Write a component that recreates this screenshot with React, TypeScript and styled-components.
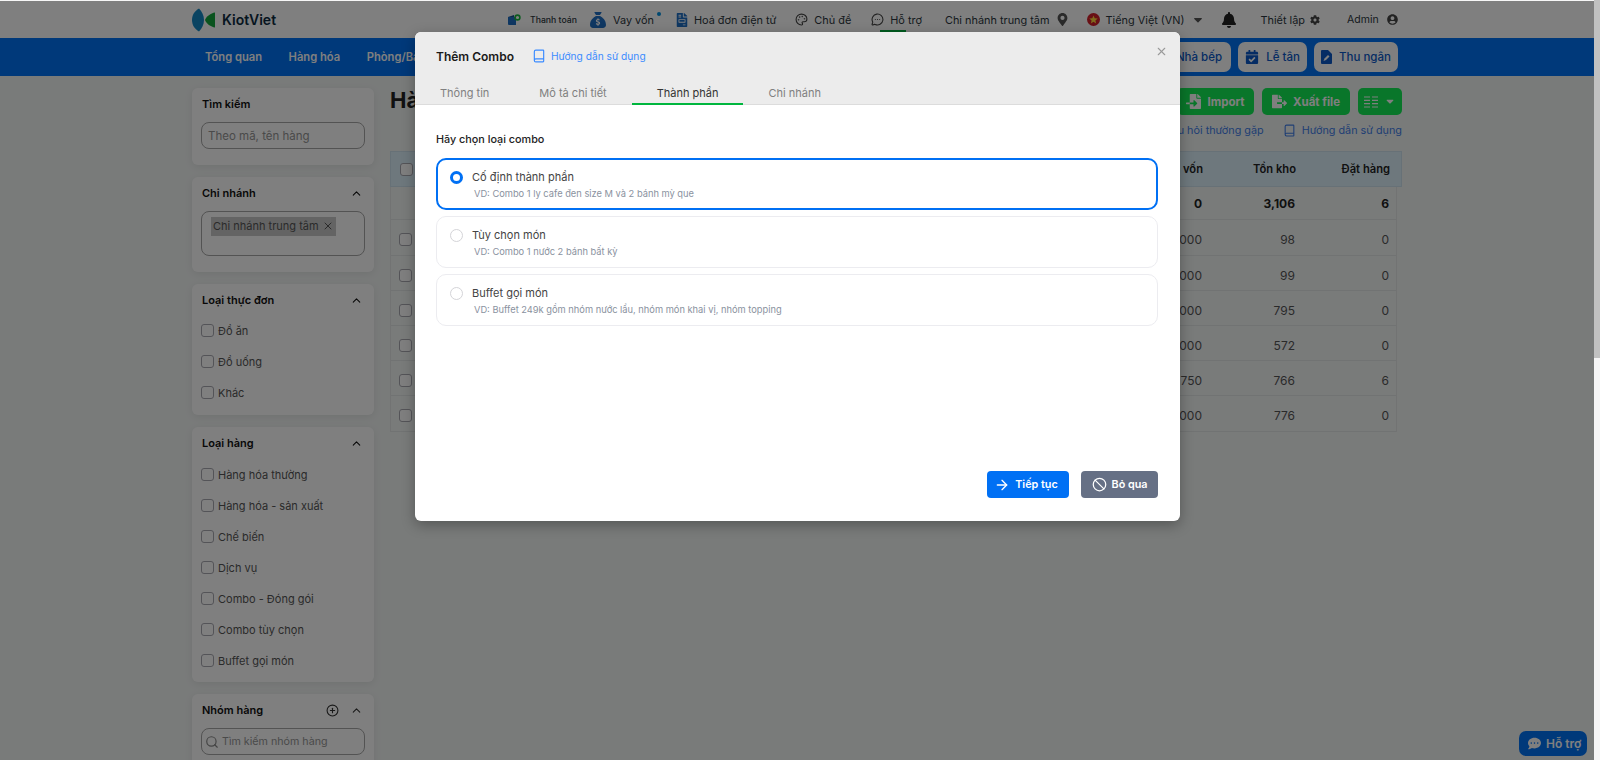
import React from "react";
import styled, { createGlobalStyle } from "styled-components";
import { ArrowRight, Ban, Book, ChevronUp, CirclePlus, MessageCircleMore, Palette, Search, X } from "lucide-react";
import { FaBell, FaCalendarCheck, FaCog, FaCommentDots, FaFileExport, FaFileImport, FaFileInvoice, FaMapMarkerAlt, FaSortDown, FaUserCircle, FaUtensils } from "react-icons/fa";
import { FaSackDollar } from "react-icons/fa6";

const Global = createGlobalStyle`
  html, body { margin: 0; height: 760px; overflow: hidden; background: #f6f6f6; }
  * { box-sizing: border-box; }
  body { font-family: Inter, "Noto Sans", "Liberation Sans", sans-serif; color: #1f2933; }
`;

const Shell = styled.div`display: flex; height: 760px; width: 1600px; overflow: hidden;`;
const Page = styled.div`position: relative; width: 1594px; height: 760px; margin-top: 1px; background: #f3f6f5; overflow: hidden;`;
const ScrollTrack = styled.div`width: 6px; height: 760px; background: #f6f6f6;`;
const ScrollThumb = styled.div`width: 6px; height: 358px; background: #c1c1c1;`;

const Header = styled.header`display: flex; align-items: center; height: 37px; padding-left: 192px; background: #fff;`;
const Logo = styled.div`display: flex; align-items: center; gap: 6px; width: 316px; font-size: 14px; font-weight: 600; color: #0d2b40;`;
const TopItem = styled.div<{ $ml: number; $size?: number; $weight?: number; $gap?: number }>`
  display: flex; align-items: center; gap: ${p => p.$gap ?? 6}px; margin-left: ${p => p.$ml}px; position: relative;
  font-size: ${p => p.$size ?? 10.9}px; font-weight: ${p => p.$weight ?? 400}; color: #2c3640; white-space: nowrap;
`;
const Dot = styled.span`position: absolute; right: -7px; top: 0; width: 4px; height: 4px; border-radius: 50%; background: #0090e0;`;
const ActiveBar = styled.span`position: absolute; left: 9px; right: 16px; bottom: -6px; height: 3px; background: #00b63e;`;

const Nav = styled.nav`display: flex; align-items: center; height: 38px; padding: 0 196px 0 205px; background: #0072f5;`;
const NavLink = styled.a`margin-right: 26.5px; font-size: 11.2px; font-weight: 600; color: #fff; white-space: nowrap;`;
const NavSpacer = styled.div`flex: 1;`;
const NavButton = styled.button<{ $w: number }>`
  display: flex; align-items: center; justify-content: center; gap: 7px; width: ${p => p.$w}px; height: 30px; margin-left: 7px;
  border: 0; border-radius: 7px; background: #fff; color: #0a58c8; font: 500 11.5px Inter, sans-serif; white-space: nowrap;
`;

const Content = styled.div`display: flex; gap: 16px; padding: 12px 192px 0;`;
const Sidebar = styled.aside`display: flex; flex-direction: column; gap: 12px; width: 182px; flex: none;`;
const Card = styled.section<{ $h: number }>`
  height: ${p => p.$h}px; padding: 0 9px; border-radius: 6px; background: #fff; box-shadow: 0 2px 8px rgba(0,0,0,.08); flex: none;
`;
const CardHead = styled.div`display: flex; align-items: center; justify-content: space-between; height: 32px; padding: 0 2px 0 1px; font-size: 11px; font-weight: 600; color: #111;`;
const HeadTools = styled.div`display: flex; align-items: center; gap: 11px; color: #333;`;
const TextInput = styled.div<{ $size?: number; $pad?: number; $gap?: number }>`
  display: flex; align-items: center; gap: ${p => p.$gap ?? 4}px; height: 27px; margin-top: 2px; padding: 0 ${p => p.$pad ?? 6}px; border: 1px solid #a6a6a6; border-radius: 8px;
  font-size: ${p => p.$size ?? 11.5}px; color: #949494;
`;
const TagBox = styled.div`height: 45px; margin-top: 2px; padding: 2px 9px; border: 1px solid #a6a6a6; border-radius: 8px;`;
const Tag = styled.span`display: inline-flex; align-items: center; gap: 3px; height: 19px; padding: 0 2px; background: #c9c9c9; font-size: 11px; color: #555;`;
const CheckList = styled.div<{ $mt?: number }>`display: flex; flex-direction: column; margin-top: ${p => p.$mt ?? 0}px;`;
const CheckRow = styled.label`display: flex; align-items: center; gap: 4px; height: 31px; font-size: 11px; color: #555;`;
const Check = styled.span`display: block; flex: none; width: 13px; height: 13px; border: 1px solid #a8a8b0; border-radius: 3px; background: #fff;`;

const Main = styled.main`flex: 1; min-width: 0;`;
const TitleRow = styled.div`display: flex; align-items: center; justify-content: space-between; height: 27px;`;
const Title = styled.h1`margin: -4px 0 0; font-size: 22px; font-weight: 700; color: #222;`;
const Tools = styled.div`display: flex; gap: 8px;`;
const GreenButton = styled.button<{ $w: number }>`
  display: flex; align-items: center; justify-content: center; gap: 6px; width: ${p => p.$w}px; height: 27px;
  border: 0; border-radius: 5px; background: #12ec54; color: #fff; font: 700 11.5px Inter, sans-serif; white-space: nowrap;
`;
const LinkRow = styled.div`display: flex; justify-content: flex-end; gap: 19px; height: 36px; padding-top: 6px; font-size: 10.8px; color: #3f7ee8;`;
const LinkItem = styled.a`display: flex; align-items: center; gap: 6px; height: 18px;`;
const Table = styled.div`font-size: 12px; color: #555;`;
const THead = styled.div`
  display: grid; grid-template-columns: 22px 1fr 112px 93px 94px; align-items: center; height: 36px; padding-right: 11px;
  background: #dcf0fb; border: 1px solid #cfe3ee; font-size: 11.2px; font-weight: 600; color: #222;
`;
const TBody = styled.div`margin-right: 5px; border-left: 1px solid #e4e7e7; border-right: 1px solid #e4e7e7;`;
const Row = styled.div<{ $h: number; $bold?: boolean }>`
  display: grid; grid-template-columns: 21px 1fr 112px 93px 94px; align-items: center; height: ${p => p.$h}px; padding-right: 7px;
  padding-top: ${p => (p.$bold ? 0 : 4)}px;
  border-bottom: 1px solid #e2e6e6; font-weight: ${p => (p.$bold ? 700 : 400)}; color: ${p => (p.$bold ? "#222" : "#555")};
`;
const Num = styled.div`text-align: right;`;
const HeadCheck = styled(Check)`margin-left: 9px;`;
const RowCheck = styled(Check)`margin-left: 8px;`;

const HelpButton = styled.button`
  position: absolute; right: 7px; bottom: 5px; display: flex; align-items: center; gap: 5px; width: 68px; height: 25px;
  padding: 0 0 0 9px; border: 0; border-radius: 7px; background: #0072f5; color: #fff; font: 600 12px Inter, sans-serif;
`;
const Backdrop = styled.div`position: absolute; inset: 0; background: rgba(0,0,0,.5);`;
const Modal = styled.div`
  position: absolute; left: 415px; top: 31px; display: flex; flex-direction: column; width: 765px; height: 489px;
  border-radius: 6px; overflow: hidden; background: #fff; box-shadow: 0 4px 14px rgba(0,0,0,.3);
`;
const ModalHead = styled.div`flex: none; height: 73px; background: #ececec; border-bottom: 1px solid #dcdcdc;`;
const HeadTop = styled.div`display: flex; align-items: center; height: 48px; padding: 0 12px 0 21px;`;
const ModalTitle = styled.div`font-size: 12px; font-weight: 600; color: #1a1a1a;`;
const GuideLink = styled.a`display: flex; align-items: center; gap: 5px; margin-left: 18px; font-size: 10.2px; color: #3b8bff;`;
const Close = styled.div`margin-left: auto; margin-top: -10px; color: #9a9a9a; display: flex;`;
const Tabs = styled.div`display: flex; height: 25px;`;
const Tab = styled.div<{ $active?: boolean }>`
  padding: 6px 25px 0; height: 25px; font-size: 11px; color: ${p => (p.$active ? "#333" : "#808080")};
  border-bottom: 2px solid ${p => (p.$active ? "#00b63e" : "transparent")};
`;
const ModalBody = styled.div`flex: 1; display: flex; flex-direction: column; padding: 28px 22px 23px 21px;`;
const Prompt = styled.div`height: 25px; font-size: 10.8px; font-weight: 500; color: #222;`;
const Options = styled.div`display: flex; flex-direction: column; gap: 6px;`;
const Option = styled.div<{ $active?: boolean }>`
  display: grid; grid-template-columns: 13px 1fr; column-gap: 9px; align-content: center; height: 52px; padding-left: ${p => (p.$active ? 12 : 13)}px;
  border-radius: 10px; border: ${p => (p.$active ? "2px solid #0070f4" : "1px solid #ececf0")};
`;
const Radio = styled.span<{ $active?: boolean }>`
  width: 13px; height: 13px; margin-top: 1px; border-radius: 50%; align-self: center; background: #fff;
  border: ${p => (p.$active ? "3.5px solid #0070f4" : "1px solid #d4d4d8")};
`;
const OptionTitle = styled.div`padding-top: 1px; font-size: 11px; color: #444; line-height: 17px;`;
const OptionSub = styled.div`grid-column: 2; padding-left: 2px; font-size: 9.3px; color: #8a92a0; line-height: 15px;`;
const Footer = styled.div`margin-top: auto; display: flex; justify-content: flex-end; gap: 12px;`;
const ActionButton = styled.button<{ $w: number; $bg: string; $pr?: number }>`
  display: flex; align-items: center; justify-content: center; gap: 5px; width: ${p => p.$w}px; height: 27px; padding: 0 ${p => p.$pr ?? 0}px 0 0;
  border: 0; border-radius: 4px; background: ${p => p.$bg}; color: #fff; font: 600 10.8px Inter, sans-serif;
`;

const WalletIcon = () => (
  <svg width="13" height="11" viewBox="0 0 13 11">
    <path d="M0 3h8v8H1a1 1 0 0 1-1-1z" fill="#1f6fc4" />
    <path d="M0 3l6-2v2z" fill="#14508f" />
    <circle cx="9.5" cy="3.5" r="2.4" fill="none" stroke="#18b83e" strokeWidth="1.6" />
  </svg>
);
const CashierIcon = () => (
  <svg width="11" height="14" viewBox="0 0 11 14">
    <path d="M1 0h6l4 4v9a1 1 0 0 1-1 1H1a1 1 0 0 1-1-1V1a1 1 0 0 1 1-1z" fill="#0a58c8" />
    <path d="M2.5 11l1-2.5L7 5l1.5 1.5L5 10z" fill="#fff" />
  </svg>
);
const Flag = () => (
  <svg width="13" height="13" viewBox="0 0 13 13">
    <circle cx="6.5" cy="6.5" r="6.5" fill="#d3202a" />
    <path d="M6.5 2.4l1.2 2.9 3 .2-2.3 2 .8 3-2.7-1.7-2.7 1.7.8-3-2.3-2 3-.2z" fill="#ffd83a" />
  </svg>
);
const LogoMark = () => (
  <svg width="24" height="24" viewBox="0 0 24 24">
    <path d="M7 .5C2.5 3 0 7 0 12s2.5 9 7 11.500c3-3 5-7 5-11.500S10 3.500 7 .5z" fill="#1588c4" />
    <path d="M23 4.500v15c-4-.5-9-4-10-7.500 1-3.500 6-7 10-7.500z" fill="#14a63c" />
  </svg>
);
const ColumnsIcon = () => (
  <svg width="14" height="12" viewBox="0 0 14 12" fill="none" stroke="#fff" strokeWidth="1.2">
    <path d="M0 1h6M8 1h6M0 4.300h6M8 4.300h6M0 7.600h6M8 7.600h6M0 11h6M8 11h6" />
  </svg>
);

const menu = ["Đồ ăn", "Đồ uống", "Khác"];
const kinds = ["Hàng hóa thường", "Hàng hóa - sản xuất", "Chế biến", "Dịch vụ", "Combo - Đóng gói", "Combo tùy chọn", "Buffet gọi món"];
const rows = [
  ["15,000", "98", "0", 36],
  ["20,000", "99", "0", 35],
  ["18,000", "795", "0", 35],
  ["12,000", "572", "0", 35],
  ["32,750", "766", "6", 35],
  ["25,000", "776", "0", 36],
] as const;
const options = [
  { t: "Cố định thành phần", s: "VD: Combo 1 ly cafe đen size M và 2 bánh mỳ que", a: true },
  { t: "Tùy chọn món", s: "VD: Combo 1 nước 2 bánh bất kỳ", a: false },
  { t: "Buffet gọi món", s: "VD: Buffet 249k gồm nhóm nước lẩu, nhóm món khai vị, nhóm topping", a: false },
];

export default function App() {
  return (
    <Shell>
      <Global />
      <Page>
        <Header>
          <Logo><LogoMark /> KiotViet</Logo>
          <TopItem $ml={0} $size={8.7} $weight={500} $gap={9}><WalletIcon />Thanh toán</TopItem>
          <TopItem $ml={13} $gap={7}><FaSackDollar size={16} color="#1f6fc4" />Vay vốn<Dot /></TopItem>
          <TopItem $ml={21} $gap={5}><FaFileInvoice size={14} color="#1f6fc4" />Hoá đơn điện tử</TopItem>
          <TopItem $ml={19}><Palette size={13} color="#444" />Chủ đề</TopItem>
          <TopItem $ml={20}><MessageCircleMore size={13} color="#444" />Hỗ trợ<ActiveBar /></TopItem>
          <TopItem $ml={23} $gap={6}>Chi nhánh trung tâm<FaMapMarkerAlt size={13} color="#555" /></TopItem>
          <TopItem $ml={18}><Flag />Tiếng Việt (VN)<FaSortDown size={14} color="#555" style={{ marginTop: -6 }} /></TopItem>
          <TopItem $ml={16}><FaBell size={16} color="#222" /></TopItem>
          <TopItem $ml={24} $gap={5}>Thiết lập<FaCog size={10} color="#444" /></TopItem>
          <TopItem $ml={27} $size={10.5} $gap={8}>Admin<FaUserCircle size={11} color="#444" /></TopItem>
        </Header>
        <Nav>
          <NavLink>Tổng quan</NavLink>
          <NavLink>Hàng hóa</NavLink>
          <NavLink>Phòng/Bàn</NavLink>
          <NavSpacer />
          <NavButton $w={84}><FaUtensils size={13} />Nhà bếp</NavButton>
          <NavButton $w={69}><FaCalendarCheck size={14} />Lễ tân</NavButton>
          <NavButton $w={84}><CashierIcon />Thu ngân</NavButton>
        </Nav>
        <Content>
          <Sidebar>
            <Card $h={77}>
              <CardHead>Tìm kiếm</CardHead>
              <TextInput>Theo mã, tên hàng</TextInput>
            </Card>
            <Card $h={95}>
              <CardHead>Chi nhánh<ChevronUp size={13} /></CardHead>
              <TagBox><Tag>Chi nhánh trung tâm <X size={12} /></Tag></TagBox>
            </Card>
            <Card $h={131}>
              <CardHead>Loại thực đơn<ChevronUp size={13} /></CardHead>
              <CheckList $mt={-1}>{menu.map(m => <CheckRow key={m}><Check />{m}</CheckRow>)}</CheckList>
            </Card>
            <Card $h={255}>
              <CardHead>Loại hàng<ChevronUp size={13} /></CardHead>
              <CheckList>{kinds.map(k => <CheckRow key={k}><Check />{k}</CheckRow>)}</CheckList>
            </Card>
            <Card $h={90}>
              <CardHead>Nhóm hàng<HeadTools><CirclePlus size={13} /><ChevronUp size={13} /></HeadTools></CardHead>
              <TextInput $size={10.7} $pad={3} $gap={3}><Search size={14} color="#888" />Tìm kiếm nhóm hàng</TextInput>
            </Card>
          </Sidebar>
          <Main>
            <TitleRow>
              <Title>Hàng hóa</Title>
              <Tools>
                <GreenButton $w={77}><FaFileImport size={15} />Import</GreenButton>
                <GreenButton $w={88}><FaFileExport size={15} />Xuất file</GreenButton>
                <GreenButton $w={44}><ColumnsIcon /><FaSortDown size={12} style={{ marginTop: -5 }} /></GreenButton>
              </Tools>
            </TitleRow>
            <LinkRow>
              <LinkItem>Câu hỏi thường gặp</LinkItem>
              <LinkItem><Book size={13} />Hướng dẫn sử dụng</LinkItem>
            </LinkRow>
            <Table>
              <THead><HeadCheck /><span /><Num>Giá vốn</Num><Num>Tồn kho</Num><Num>Đặt hàng</Num></THead>
              <TBody>
                <Row $h={33} $bold><span /><span /><Num>0</Num><Num>3,106</Num><Num>6</Num></Row>
                {rows.map(r => (
                  <Row key={r[1]} $h={r[3]}><RowCheck /><span /><Num>{r[0]}</Num><Num>{r[1]}</Num><Num>{r[2]}</Num></Row>
                ))}
              </TBody>
            </Table>
          </Main>
        </Content>
        <HelpButton><FaCommentDots size={13} />Hỗ trợ</HelpButton>
        <Backdrop />
        <Modal>
          <ModalHead>
            <HeadTop>
              <ModalTitle>Thêm Combo</ModalTitle>
              <GuideLink><Book size={14} />Hướng dẫn sử dụng</GuideLink>
              <Close><X size={13} /></Close>
            </HeadTop>
            <Tabs>
              <Tab>Thông tin</Tab>
              <Tab>Mô tả chi tiết</Tab>
              <Tab $active>Thành phần</Tab>
              <Tab>Chi nhánh</Tab>
            </Tabs>
          </ModalHead>
          <ModalBody>
            <Prompt>Hãy chọn loại combo</Prompt>
            <Options>
              {options.map(o => (
                <Option key={o.t} $active={o.a}>
                  <Radio $active={o.a} />
                  <OptionTitle>{o.t}</OptionTitle>
                  <OptionSub>{o.s}</OptionSub>
                </Option>
              ))}
            </Options>
            <Footer>
              <ActionButton $w={82} $bg="#0070f4" $pr={4}><ArrowRight size={16} />Tiếp tục</ActionButton>
              <ActionButton $w={77} $bg="#667085"><Ban size={15} />Bỏ qua</ActionButton>
            </Footer>
          </ModalBody>
        </Modal>
      </Page>
      <ScrollTrack><ScrollThumb /></ScrollTrack>
    </Shell>
  );
}
